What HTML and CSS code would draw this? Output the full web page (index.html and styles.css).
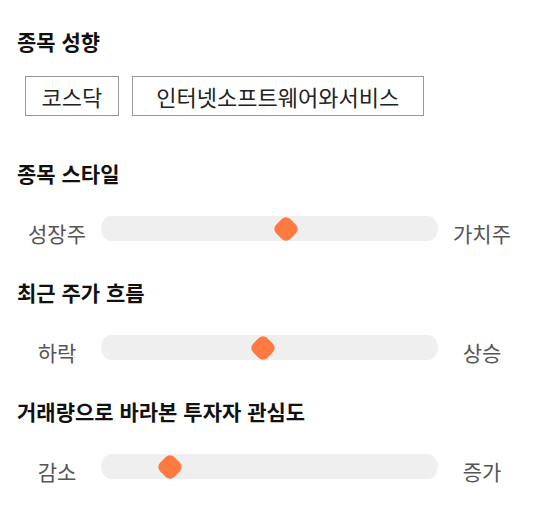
FILE: index.html
```html
<!DOCTYPE html>
<html lang="ko">

<head>
    <meta charset="UTF-8">
    <meta name="viewport" content="width=device-width, initial-scale=1.0">
    <title>종목 분석</title>
    <link rel="stylesheet" href="styles.css">
</head>

<body>
    <div id="content">
        <div class="section">
            <div class="title">종목 성향</div>
            <div class="tags">
                <span class="tag">코스닥</span>
                <span class="tag tag-wide">인터넷소프트웨어와서비스</span>
            </div>
        </div>

        <div class="section">
            <div class="title">종목 스타일</div>
            <div class="slider">
                <span class="label">성장주</span>
                <div class="track">
                    <span class="thumb" style="left: 55%"></span>
                </div>
                <span class="label">가치주</span>
            </div>
        </div>

        <div class="section">
            <div class="title">최근 주가 흐름</div>
            <div class="slider">
                <span class="label">하락</span>
                <div class="track">
                    <span class="thumb" style="left: 48.2%"></span>
                </div>
                <span class="label">상승</span>
            </div>
        </div>

        <div class="section">
            <div class="title">거래량으로 바라본 투자자 관심도</div>
            <div class="slider">
                <span class="label">감소</span>
                <div class="track">
                    <span class="thumb" style="left: 20.5%"></span>
                </div>
                <span class="label">증가</span>
            </div>
        </div>
    </div>
</body>

</html>
```

FILE: styles.css
```css
html,
body {
    margin: 0;
    background: #fff;
}

#content {
    padding: 30px 18px 0 17px;
    font-family: "Noto Sans CJK KR", "Noto Sans", sans-serif;
    color: #111;
}

.section {
    margin-bottom: 40px;
}

.section:first-child {
    margin-bottom: 46px;
}

.title {
    font-size: 21px;
    font-weight: bold;
    line-height: 22px;
}

.tags {
    display: flex;
    gap: 13px;
    margin-top: 24px;
    padding-left: 8px;
}

.tag {
    display: inline-block;
    height: 38px;
    line-height: 38px;
    padding: 0 15.5px;
    border: 1px solid #999;
    font-size: 22px;
    color: #222;
}

.tag-wide {
    padding: 0 23.5px;
}

.slider {
    display: flex;
    align-items: center;
    gap: 4px;
    height: 25px;
    margin-top: 32px;
}

.label {
    width: 80px;
    padding-top: 8px;
    text-align: center;
    font-size: 21px;
    line-height: 30px;
    color: #555;
}

.track {
    flex: 1;
    height: 25px;
    background: #efefef;
    border-radius: 10px / 12.5px;
    position: relative;
}

.thumb {
    position: absolute;
    top: 50%;
    width: 20px;
    height: 20px;
    background: #ff7a40;
    border-radius: 6px;
    transform: translate(-50%, -50%) rotate(45deg);
}
```
